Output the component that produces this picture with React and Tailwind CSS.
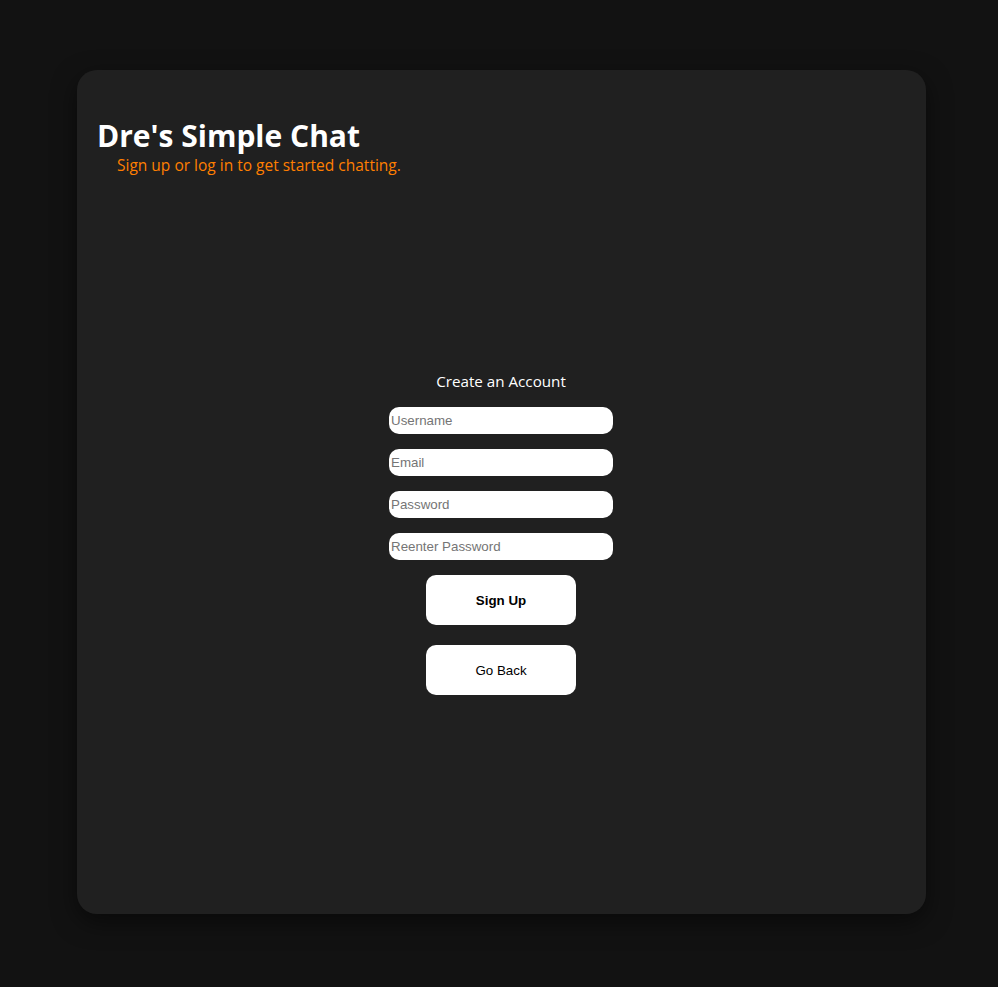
export default function App() {
  const inputs = ["Username", "Email", "Password", "Reenter Password"];
  return (
    <div className="min-h-[987px] w-full bg-[#121212] pt-[70px]" style={{ fontFamily: '"Open Sans", "Noto Sans", sans-serif' }}>
      <div className="ml-[77px] flex h-[844px] w-[849px] flex-col rounded-[20px] bg-[#202020] pl-5 pr-[21px] shadow-[0_8px_24px_rgba(0,0,0,0.5)]">
        <h1 className="mt-[46px] text-[30px] font-bold leading-[39px] text-white">Dre&apos;s Simple Chat</h1>
        <p className="ml-5 text-[15.5px] leading-[20px] text-[#ff7f00]">Sign up or log in to get started chatting.</p>
        <div className="mt-[194px] flex flex-col items-center">
          <div className="text-[15.2px] leading-[24px] text-white">Create an Account</div>
          <div className="mt-[14px] flex flex-col gap-[15px]" style={{ fontFamily: '"Liberation Sans", Arial, sans-serif' }}>
            {inputs.map((p) => (
              <input
                key={p}
                type={p.includes("Password") ? "password" : "text"}
                placeholder={p}
                className="h-[27px] w-[224px] rounded-[10px] bg-white px-[2px] text-[13.33px] text-black outline-none placeholder:text-[#757575]"
              />
            ))}
          </div>
          <button className="mt-[15px] h-[50px] w-[150px] rounded-[10px] bg-white pt-[1px] text-[13.33px] font-bold text-black" style={{ fontFamily: '"Liberation Sans", Arial, sans-serif' }}>Sign Up</button>
          <button className="mt-[20px] h-[50px] w-[150px] rounded-[10px] bg-white pt-[1px] text-[13.33px] text-black" style={{ fontFamily: '"Liberation Sans", Arial, sans-serif' }}>Go Back</button>
        </div>
      </div>
    </div>
  );
}
